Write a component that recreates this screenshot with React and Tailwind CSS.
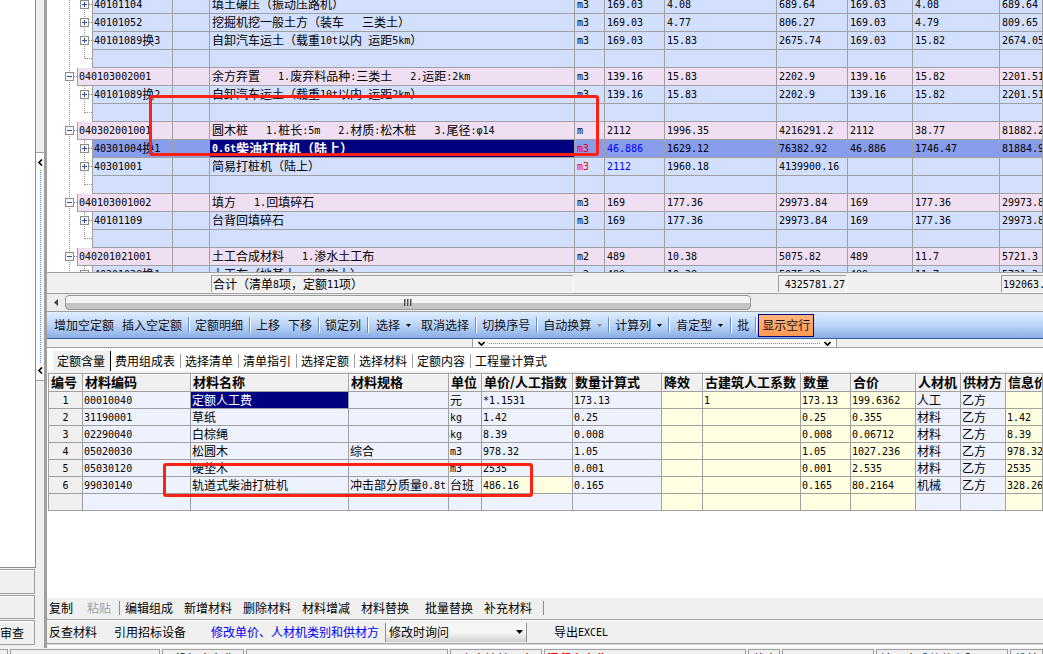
import { useState } from 'react';
import { clsx } from 'clsx';

// kind: 'bill' = list item, 'quota' = child row, 'blank' = empty child row
const BILL_ROWS = [
  { kind: 'quota', cells: ['40101104', '', '填土碾压（振动压路机）', 'm3', '169.03', '4.08', '689.64', '169.03', '4.08', '689.64'] },
  { kind: 'quota', cells: ['40101052', '', '挖掘机挖一般土方（装车   三类土）', 'm3', '169.03', '4.77', '806.27', '169.03', '4.79', '809.65'] },
  { kind: 'quota', cells: ['40101089换3', '', '自卸汽车运土（载重10t以内 运距5km）', 'm3', '169.03', '15.83', '2675.74', '169.03', '15.82', '2674.05'] },
  { kind: 'blank', cells: ['', '', '', '', '', '', '', '', '', ''] },
  { kind: 'bill', cells: ['040103002001', '', '余方弃置   1.废弃料品种:三类土   2.运距:2km', 'm3', '139.16', '15.83', '2202.9', '139.16', '15.82', '2201.51'] },
  { kind: 'quota', cells: ['40101089换2', '', '自卸汽车运土（载重10t以内 运距2km）', 'm3', '139.16', '15.83', '2202.9', '139.16', '15.82', '2201.51'] },
  { kind: 'blank', cells: ['', '', '', '', '', '', '', '', '', ''] },
  { kind: 'bill', cells: ['040302001001', '', '圆木桩   1.桩长:5m   2.材质:松木桩   3.尾径:φ14', 'm', '2112', '1996.35', '4216291.2', '2112', '38.77', '81882.24'] },
  { kind: 'quota', selected: true, edited: true, cells: ['40301004换1', '', '0.6t柴油打桩机（陆上）', 'm3', '46.886', '1629.12', '76382.92', '46.886', '1746.47', '81884.99'] },
  { kind: 'quota', edited: true, cells: ['40301001', '', '简易打桩机（陆上）', 'm3', '2112', '1960.18', '4139900.16', '', '', ''] },
  { kind: 'blank', cells: ['', '', '', '', '', '', '', '', '', ''] },
  { kind: 'bill', cells: ['040103001002', '', '填方   1.回填碎石', 'm3', '169', '177.36', '29973.84', '169', '177.36', '29973.84'] },
  { kind: 'quota', cells: ['40101109', '', '台背回填碎石', 'm3', '169', '177.36', '29973.84', '169', '177.36', '29973.84'] },
  { kind: 'blank', cells: ['', '', '', '', '', '', '', '', '', ''] },
  { kind: 'bill', cells: ['040201021001', '', '土工合成材料   1.渗水土工布', 'm2', '489', '10.38', '5075.82', '489', '11.7', '5721.3'] },
  { kind: 'quota', cells: ['40201038换1', '', '土工布（地基土 一般软土）', 'm2', '489', '10.38', '5075.82', '489', '11.7', '5721.3'] },
];

const MATERIAL_HEAD = ['编号', '材料编码', '材料名称', '材料规格', '单位', '单价/人工指数', '数量计算式', '降效', '古建筑人工系数', '数量', '合价', '人材机', '供材方', '信息价'];
const MATERIAL_ROWS = [
  ['1', '00010040', '定额人工费', '', '元', '*1.1531', '173.13', '', '1', '173.13', '199.6362', '人工', '乙方', ''],
  ['2', '31190001', '草纸', '', 'kg', '1.42', '0.25', '', '', '0.25', '0.355', '材料', '乙方', '1.42'],
  ['3', '02290040', '白棕绳', '', 'kg', '8.39', '0.008', '', '', '0.008', '0.06712', '材料', '乙方', '8.39'],
  ['4', '05020030', '松圆木', '综合', 'm3', '978.32', '1.05', '', '', '1.05', '1027.236', '材料', '乙方', '978.32'],
  ['5', '05030120', '硬垫木', '', 'm3', '2535', '0.001', '', '', '0.001', '2.535', '材料', '乙方', '2535'],
  ['6', '99030140', '轨道式柴油打桩机', '冲击部分质量0.8t', '台班', '486.16', '0.165', '', '', '0.165', '80.2164', '机械', '乙方', '328.26'],
  ['', '', '', '', '', '', '', '', '', '', '', '', '', ''],
];
const YELLOW_COLS = [7, 8, 9, 10, 13];

const TABS = ['定额含量', '费用组成表', '选择清单', '清单指引', '选择定额', '选择材料', '定额内容', '工程量计算式'];

// Latin runs use a half-width face so that two of them match one Chinese character
function Txt({ children }) {
  return children.split(/([\x20-\x7eφ]+)/).map((part, i) =>
    i % 2 ? <span key={i} className="align-[1px] font-['DejaVu_Sans_Mono',monospace] text-[10px] leading-none">{part}</span> : part
  );
}

function TreeLines({ kind }) {
  const child = kind !== 'bill';
  const x = child ? 37 : 22;
  return (
    <svg width={child ? 45 : 30} height="18" className="shrink-0" shapeRendering="crispEdges" aria-hidden="true">
      <g stroke="#8c8c8c" strokeDasharray="1 1">
        <path d="M22.5 0V18" />
        {kind === 'quota' && <path d="M37.5 0V18" />}
        {kind === 'blank' && <path d="M37.5 0V9M38 8.5H45" />}
        {kind !== 'blank' && <path d={`M${x + 5} 8.5h4`} />}
      </g>
      {kind !== 'blank' && (
        <>
          <rect x={x - 3.5} y="4.5" width="8" height="8" fill="#f6f6f6" stroke="#8c8c8c" />
          <path d={`M${x - 2} 8.5h5`} stroke="#3050a0" />
          {child && <path d={`M${x + 0.5} 6v5`} stroke="#3050a0" />}
        </>
      )}
    </svg>
  );
}

function BillRow({ row }) {
  const bg = row.selected ? 'bg-[#889cec]' : row.kind === 'bill' ? 'bg-[#f0dff2]' : 'bg-[#d3dfff]';
  return (
    <tr>
      {row.cells.map((text, i) => {
        if (i === 0) {
          return (
            <td key={i} className="h-[18px] p-0">
              <div className="flex h-[18px]">
                <TreeLines kind={row.kind} />
                <div className={clsx('flex-1 overflow-hidden border-x border-b border-[#a0a0a0] px-px', bg)}>
                  <Txt>{text}</Txt>
                </div>
              </div>
            </td>
          );
        }
        return (
          <td
            key={i}
            className={clsx(
              'h-[18px] overflow-hidden border-r border-b border-[#a0a0a0] px-[2px] pt-0 pb-px',
              row.selected && i === 2 ? 'bg-[#000080] text-[13px] font-bold text-white' : bg,
              row.edited && i === 3 && 'text-[#f00000]',
              row.edited && i === 4 && 'text-[#0000f0]'
            )}
          >
            <Txt>{text}</Txt>
          </td>
        );
      })}
    </tr>
  );
}

function Sep() {
  return <span className="mx-[2px] h-4 w-px shrink-0 bg-[#6a8ccb] shadow-[1px_0_0_#fff]" />;
}

function Caret({ className }) {
  return (
    <svg width="5" height="3" viewBox="0 0 5 3" className={className} aria-hidden="true">
      <path d="M0 0h5L2.5 3z" fill="currentColor" />
    </svg>
  );
}

function ToolButton({ children, menu, muted, className = 'px-1' }) {
  return (
    <button type="button" className={clsx('flex h-[22px] shrink-0 items-center gap-1.5', className)}>
      {children}
      {menu && <Caret className={muted ? 'text-[#8a8a8a]' : 'text-black'} />}
    </button>
  );
}

function Chevron({ d }) {
  return (
    <svg width="7" height="7" viewBox="0 0 7 7" fill="none" stroke="#000" strokeWidth="1.6" className="shrink-0" aria-hidden="true">
      <path d={d} />
    </svg>
  );
}

function LeftPanel() {
  return (
    <aside className="flex w-9 shrink-0 flex-col">
      <div className="flex-1 border-r border-b border-[#8c8c8c] bg-white" />
      <div className="flex h-20 flex-col gap-px pt-px pr-px pb-[3px]">
        {['', '', '审查'].map((label, i) => (
          <button
            key={i}
            type="button"
            aria-label={label || `面板${i + 1}`}
            className="flex-1 border border-l-0 border-[#a0a0a0] pr-[11px] text-right whitespace-nowrap shadow-[inset_0_1px_0_#fff]"
          >
            {label}
          </button>
        ))}
      </div>
    </aside>
  );
}

function VerticalSplitter() {
  return (
    <div className="w-2 shrink-0 pt-[152px]">
      <button type="button" aria-label="收起" className="flex h-[229px] w-full flex-col items-center justify-between border-y border-[#a0a0a0] bg-[#fafafa] py-[6px]">
        <Chevron d="M5 0.5L2 3.5L5 6.5" />
        <span className="my-1 w-0 flex-1 border-l border-dotted border-[#3d95ff]" />
        <Chevron d="M5 0.5L2 3.5L5 6.5" />
      </button>
    </div>
  );
}

function BillGrid() {
  return (
    <div className="h-[272px] shrink-0 overflow-hidden bg-white">
      <table className="-mt-1 w-full table-fixed border-separate border-spacing-0">
        <colgroup>
          <col className="w-[126px]" />
          <col className="w-[37px]" />
          <col className="w-[365px]" />
          <col className="w-[30px]" />
          <col className="w-[60px]" />
          <col className="w-[112px]" />
          <col className="w-[71px]" />
          <col className="w-[65px]" />
          <col className="w-[87px]" />
          <col />
        </colgroup>
        <tbody className="leading-4 whitespace-pre">
          {BILL_ROWS.map((row, i) => <BillRow key={i} row={row} />)}
        </tbody>
      </table>
    </div>
  );
}

function TotalRow() {
  const box = 'h-[17px] overflow-hidden border-t border-l border-[#a0a0a0] px-px leading-4 whitespace-pre shadow-[1px_1px_0_#fff]';
  return (
    <div className="flex h-[22px] shrink-0 items-center border-y border-[#a0a0a0]">
      <div className={clsx(box, 'ml-[164px] w-[362px]')}><Txt>合计（清单8项，定额11项）</Txt></div>
      <div className={clsx(box, 'ml-[205px] w-[68px] text-right')}><Txt>4325781.27</Txt></div>
      <div className={clsx(box, 'ml-[155px] flex-1')}><Txt>192063.54</Txt></div>
    </div>
  );
}

function ScrollBar() {
  return (
    <div className="flex h-[18px] shrink-0 items-center border-b border-[#a0a0a0] bg-[#ececec]">
      <span className="flex w-[18px] justify-center">
        <svg width="4" height="7" viewBox="0 0 4 7" aria-hidden="true"><path d="M4 0v7L0 3.5z" fill="#404040" /></svg>
      </span>
      <div className="flex h-[15px] flex-[685] items-center justify-center gap-px rounded-sm border border-[#989898] bg-linear-to-b from-[#f4f4f4] from-50% to-[#c4c4c4] to-55%">
        {[0, 1, 2].map((i) => <span key={i} className="h-[7px] w-[2px] border-l border-[#505050] bg-[#a0a0a0]" />)}
      </div>
      <div className="flex-[293]" />
    </div>
  );
}

function Toolbar() {
  const [showBlank, setShowBlank] = useState(true);
  return (
    <div className="flex h-[27px] shrink-0 items-center overflow-hidden border-b border-[#3a5fa8] bg-linear-to-b from-[#dfeeff] via-[#bcd5f7] to-[#88ade6] pl-[3px] whitespace-nowrap text-[#101020]">
      <ToolButton>增加空定额</ToolButton>
      <ToolButton>插入空定额</ToolButton>
      <Sep />
      <ToolButton>定额明细</ToolButton>
      <Sep />
      <ToolButton>上移</ToolButton>
      <ToolButton>下移</ToolButton>
      <Sep />
      <ToolButton>锁定列</ToolButton>
      <Sep />
      <ToolButton menu className="px-1.5">选择</ToolButton>
      <ToolButton>取消选择</ToolButton>
      <Sep />
      <ToolButton>切换序号</ToolButton>
      <Sep />
      <ToolButton menu muted>自动换算</ToolButton>
      <Sep />
      <ToolButton menu>计算列</ToolButton>
      <Sep />
      <ToolButton menu className="px-[5px]">肯定型</ToolButton>
      <Sep />
      <ToolButton>批</ToolButton>
      <Sep />
      <button
        type="button"
        aria-pressed={showBlank}
        onClick={() => setShowBlank(!showBlank)}
        className="h-[23px] shrink-0 border border-[#000080] bg-linear-to-b from-[#ffb57c] to-[#ff9a50] px-[3px]"
      >
        显示空行
      </button>
    </div>
  );
}

function HorizontalSplitter() {
  return (
    <div className="h-[9px] shrink-0 border-b border-[#a0a0a0] pl-[425px]">
      <button type="button" aria-label="折叠" className="flex h-2 w-[365px] items-center justify-between border-x border-[#a0a0a0] bg-[#fafafa] px-[5px]">
        <Chevron d="M0.5 2L3.5 5L6.5 2" />
        <span className="mx-1 h-0 flex-1 border-t border-dotted border-[#3d95ff]" />
        <Chevron d="M0.5 2L3.5 5L6.5 2" />
      </button>
    </div>
  );
}

function DetailTabs() {
  const [active, setActive] = useState(0);
  return (
    <div role="tablist" className="flex h-[23px] shrink-0 items-end bg-white pl-[6px] whitespace-nowrap">
      {TABS.map((tab, i) => (
        <button
          key={tab}
          type="button"
          role="tab"
          aria-selected={i === active}
          onClick={() => setActive(i)}
          className={clsx('flex h-5 shrink-0 items-center', i === active && 'bg-[#f0f0f0]')}
        >
          <span className="pr-[5px] pl-1">{tab}</span>
          <span className={clsx('w-px', i === active ? 'h-5 bg-black' : i < TABS.length - 1 && 'h-3.5 bg-[#a0a0a0]')} />
        </button>
      ))}
    </div>
  );
}

function MaterialGrid() {
  return (
    <div className="flex-1 overflow-hidden bg-white">
      <div className="border-t-2 border-[#f0f0f0] pl-px">
        <table className="w-full table-fixed border-separate border-spacing-0 border-t border-l border-[#a0a0a0]">
          <colgroup>
            <col className="w-[34px]" />
            <col className="w-[108px]" />
            <col className="w-[158px]" />
            <col className="w-[100px]" />
            <col className="w-[33px]" />
            <col className="w-[91px]" />
            <col className="w-[89px]" />
            <col className="w-[41px]" />
            <col className="w-[98px]" />
            <col className="w-[50px]" />
            <col className="w-[65px]" />
            <col className="w-[45px]" />
            <col className="w-[45px]" />
            <col />
          </colgroup>
          <thead>
            <tr>
              {MATERIAL_HEAD.map((h) => (
                <th key={h} scope="col" className="h-[18px] overflow-hidden border-r border-b border-[#a0a0a0] bg-[#f0f0f0] px-[2px] pt-0 pb-px text-left text-[13px] leading-4 font-bold whitespace-nowrap shadow-[inset_1px_1px_0_#fff]">
                  {h}
                </th>
              ))}
            </tr>
          </thead>
          <tbody className="leading-4 whitespace-pre">
            {MATERIAL_ROWS.map((row, r) => (
              <tr key={r}>
                {row.map((text, c) => (
                  <td
                    key={c}
                    className={clsx(
                      'h-[17px] overflow-hidden border-r border-b border-[#a0a0a0] px-px py-0',
                      c === 0
                        ? 'bg-[#f0f0f0] text-center'
                        : r === 0 && c === 2
                          ? 'bg-[#000080] text-white'
                          : YELLOW_COLS.includes(c) || (r === 5 && c === 5)
                            ? 'bg-[#ffffe1]'
                            : 'bg-[#eef2ff]'
                    )}
                  >
                    <Txt>{text}</Txt>
                  </td>
                ))}
              </tr>
            ))}
          </tbody>
        </table>
      </div>
    </div>
  );
}

function BottomBars() {
  return (
    <div className="shrink-0 whitespace-nowrap">
      <div className="flex h-[22px] items-center border-b border-[#a0a0a0] pb-[2px] pl-[2px]">
        <button type="button" className="w-[38px] text-left">复制</button>
        <button type="button" disabled className="w-8 text-left text-[#a0a0a0]">粘贴</button>
        <span className="mr-[5px] h-3.5 w-px bg-[#8c8c8c]" />
        {['编辑组成', '新增材料', '删除材料', '材料增减', '材料替换'].map((t) => (
          <button key={t} type="button" className="w-[59px] text-left">{t}</button>
        ))}
        <span className="w-[5px]" />
        {['批量替换', '补充材料'].map((t) => (
          <button key={t} type="button" className="w-[59px] text-left">{t}</button>
        ))}
        <span className="h-3.5 w-px bg-[#8c8c8c]" />
      </div>
      <div className="flex h-[24px] items-center border-t border-b border-t-white border-b-[#a0a0a0] pl-[2px]">
        <button type="button" className="w-[65px] text-left">反查材料</button>
        <button type="button" className="w-[97px] text-left">引用招标设备</button>
        <label htmlFor="modify-mode" className="w-[174px] text-[#0000f0]">修改单价、人材机类别和供材方</label>
        <div className="grid items-center">
          <select
            id="modify-mode"
            defaultValue="ask"
            className="col-start-1 row-start-1 h-[19px] w-[142px] appearance-none border-x border-[#8c8c8c] bg-linear-to-b from-[#f6f6f6] from-50% to-[#d0d0d0] px-[3px]"
          >
            <option value="ask">修改时询问</option>
            <option value="all">全部修改</option>
          </select>
          <svg width="7" height="4" viewBox="0 0 7 4" className="pointer-events-none col-start-1 row-start-1 mr-1 justify-self-end" aria-hidden="true">
            <path d="M0 0h7L3.5 4z" />
          </svg>
        </div>
        <button type="button" className="ml-[27px]"><Txt>导出EXCEL</Txt></button>
      </div>
      <div className="h-1 border-t border-[#d8d8d8] bg-white" />
    </div>
  );
}

function StatusBar() {
  const box = 'h-5 shrink-0 overflow-hidden border border-[#a0a0a0] leading-[18px]';
  return (
    <footer className="flex shrink-0 gap-[2px] overflow-hidden pt-px whitespace-nowrap">
      <div className={clsx(box, 'w-2 border-l-0')} />
      <div className={clsx(box, 'w-[150px]')} />
      <div className={clsx(box, 'w-[82px] pl-3')}>投标人名称</div>
      <div className={clsx(box, 'w-[202px]')} />
      <div className={clsx(box, 'w-[92px] pl-2.5')}>上高端并用大</div>
      <div className={clsx(box, 'w-[202px] pl-[2px] font-bold text-[#f00000]')}>混凝土实业</div>
      <div className={clsx(box, 'w-8 pl-1')}>状态</div>
      <div className={clsx(box, 'w-[92px]')} />
      <div className={clsx(box, 'w-[132px] pl-1')}>清州大成软件有限公司</div>
      <div className={clsx(box, 'flex-1 pl-1')}>维护</div>
    </footer>
  );
}

export default function App() {
  return (
    <div className="relative flex h-screen flex-col overflow-hidden bg-[#f0f0f0] font-['Noto_Sans_CJK_SC',sans-serif] text-xs leading-4 text-black">
      <div className="flex h-[calc(100vh-6px)] shrink-0">
        <LeftPanel />
        <VerticalSplitter />
        <main className="flex min-w-0 flex-1 flex-col border-l-3 border-[#a0a0a0]">
          <BillGrid />
          <TotalRow />
          <ScrollBar />
          <Toolbar />
          <HorizontalSplitter />
          <DetailTabs />
          <MaterialGrid />
          <BottomBars />
        </main>
      </div>
      <StatusBar />

      {/* Hand-drawn highlights over both grids */}
      <div className="pointer-events-none absolute top-[95px] left-[149px] h-[61px] w-[450px] rounded-[3px] border-3 border-[#ff2014]" />
      <div className="pointer-events-none absolute top-[463px] left-[163px] h-[34px] w-[370px] rounded-[3px] border-3 border-[#ff2014]" />
    </div>
  );
}
